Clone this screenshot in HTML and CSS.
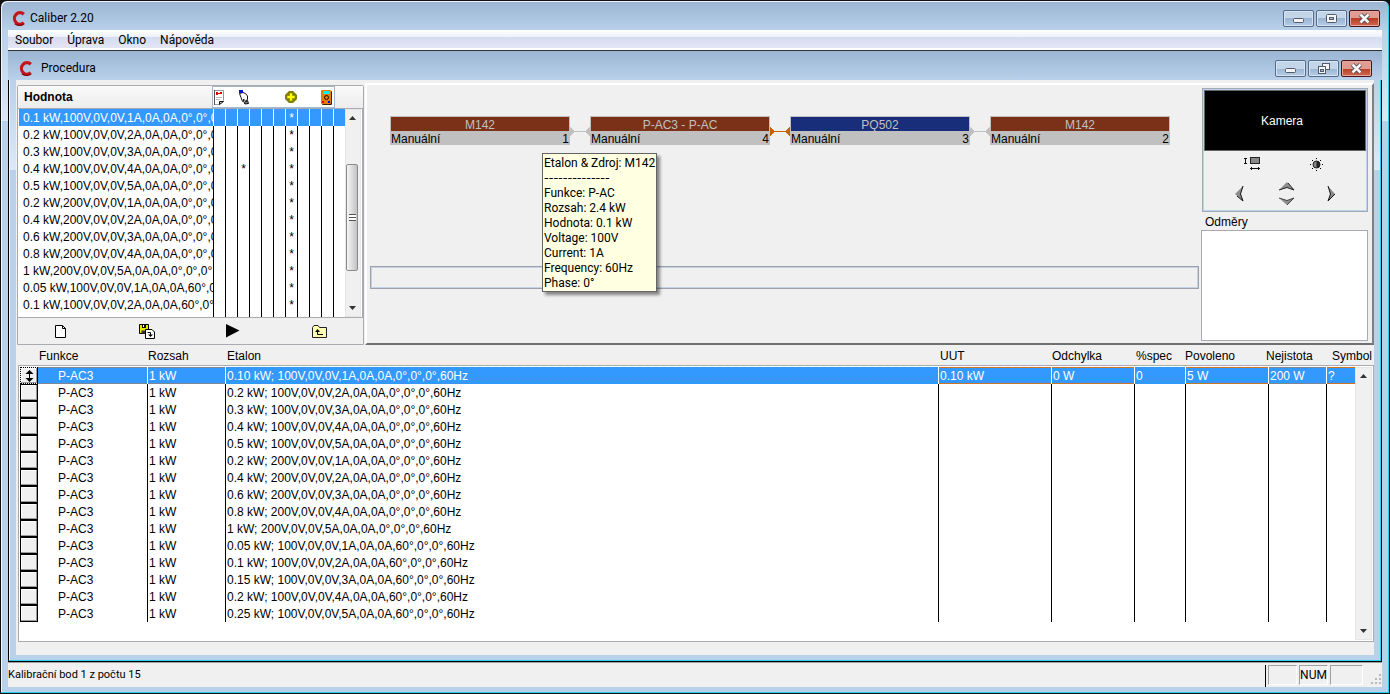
FILE: index.html
```html
<!DOCTYPE html>
<html lang="cs">
<head>
<meta charset="utf-8">
<title>Caliber 2.20</title>
<link rel="stylesheet" href="styles.css">
</head>
<body>
<svg class="defs" aria-hidden="true">
  <symbol id="i-c" viewBox="0 0 14 16"><path d="M12 4A5.200 5.500 0 1 0 12 12" fill="none" stroke="#c4161a" stroke-width="3"/><path d="M3.500 13A6 5 0 0 0 12 13" fill="none" stroke="#7d0508" stroke-width="1"/></symbol>
  <symbol id="i-min" viewBox="0 0 29 15"><rect x="9.500" y="7.500" width="10" height="4" rx="1" fill="#f4f4f4" stroke="#555a66"/></symbol>
  <symbol id="i-max" viewBox="0 0 29 15"><rect x="9.500" y="3.500" width="10" height="8" rx="1" fill="#f4f4f4" stroke="#555a66"/><rect x="12.500" y="6.500" width="4" height="2" fill="#9fbbd8" stroke="#555a66"/></symbol>
  <symbol id="i-rest" viewBox="0 0 29 15"><rect x="13.500" y="2.500" width="7" height="6" fill="#f4f4f4" stroke="#555a66"/><rect x="9.500" y="5.500" width="7" height="7" fill="#f4f4f4" stroke="#555a66"/><rect x="11.500" y="8.500" width="3" height="2" fill="#9fbbd8" stroke="#555a66"/></symbol>
  <symbol id="i-close" viewBox="0 0 29 15"><path d="M10.500 3.500L18.500 11.500M18.500 3.500L10.500 11.500" stroke="#4b4651" stroke-width="4.500"/><path d="M10.500 3.500L18.500 11.500M18.500 3.500L10.500 11.500" stroke="#f6f6f6" stroke-width="2.600"/></symbol>
  <symbol id="i-up" viewBox="0 0 7 4"><path d="M0 4L3.500 0L7 4Z" fill="#333"/></symbol>
  <symbol id="i-down" viewBox="0 0 7 4"><path d="M0 0L3.500 4L7 0Z" fill="#333"/></symbol>
</svg>
<div class="window">
  <header class="titlebar">
    <svg class="logo"><use href="#i-c"/></svg><h1 class="caption">Caliber 2.20</h1>
    <div class="controls">
      <button class="ctl" aria-label="Minimalizovat"><svg><use href="#i-min"/></svg></button>
      <button class="ctl" aria-label="Maximalizovat"><svg><use href="#i-max"/></svg></button>
      <button class="ctl ctl-close" aria-label="Zavřít"><svg><use href="#i-close"/></svg></button>
    </div>
  </header>
  <nav class="menu"><button>Soubor</button><button>Úprava</button><button>Okno</button><button>Nápověda</button></nav>

  <section class="child">
    <header class="titlebar child-title">
      <svg class="logo"><use href="#i-c"/></svg><h2 class="caption">Procedura</h2>
      <div class="controls">
        <button class="ctl" aria-label="Minimalizovat"><svg><use href="#i-min"/></svg></button>
        <button class="ctl" aria-label="Obnovit"><svg><use href="#i-rest"/></svg></button>
        <button class="ctl ctl-close" aria-label="Zavřít"><svg><use href="#i-close"/></svg></button>
      </div>
    </header>
    <div class="frame">
      <main class="client">
        <div class="upper">
          <section class="points">
            <div class="points-head">
              <strong>Hodnota</strong>
              <div class="marks">
                <svg class="m1" viewBox="0 0 12 15"><path d="M.5.5H9.500V10.500L5.500 14.500H.5Z" fill="#fff" stroke="#999"/><path d="M.5 0V15" stroke="#555"/><path d="M5.500 14.500V11.500H9.500Z" fill="#ddd" stroke="#111"/><path d="M2 3.500H8" stroke="#e00000" stroke-width="1"/><path d="M2 2h2v3H2zM6 2h2v2H6z" fill="#e00000"/><path d="M2 7.500H8M2 9.500H6" stroke="#bbb"/></svg>
                <svg class="m2" viewBox="0 0 12 15"><path d="M1.500 3.500L3 7.500L4.500 11.500H5.500V9L8 11.500L9.500 9V6L7.500 3.500L5 2.500Z" fill="#fff" stroke="#111"/><path d="M6 12.500L9.500 10.500L10.500 13.500L7 14Z" fill="#777" stroke="#111"/><path d="M1 0H5V3H1Z" fill="#0015c8"/></svg>
                <svg class="m3" viewBox="0 0 12 12"><path d="M4 0H8L12 4V8L8 12H4L0 8V4Z" fill="#7d7d00"/><path d="M4.500 2H7.500V4.500H10V7.500H7.500V10H4.500V7.500H2V4.500H4.500Z" fill="#b5b500"/><path d="M6 2.500V9.500M2.500 6H9.500" stroke="#ff0" stroke-width="2"/></svg>
                <svg class="m4" viewBox="0 0 11 15"><rect x="1" y="1" width="10" height="14" rx="1" fill="#3a2000"/><rect x="0" y="0" width="10" height="14" rx="1" fill="#e57b00"/><rect x="2" y="1" width="7" height="3" fill="#00f3f3"/><circle cx="5.500" cy="7.500" r="2" fill="none" stroke="#111"/><path d="M1 11h2v2H1z" fill="#e00"/><path d="M7 11h2v2H7z" fill="#00e"/></svg>
              </div>
            </div>
            <div class="list">
              <table class="list-table">
                <colgroup><col class="v"><col class="m"><col class="m"><col class="m"><col class="m"><col class="m"><col class="m"><col class="m"><col class="m"><col class="m"><col class="m"><col class="m"></colgroup>
                <tbody>
                <tr class="sel"><td>0.1 kW,100V,0V,0V,1A,0A,0A,0°,0°,0<td><td><td><td><td><td><td>*<td><td><td><td></tr>
                <tr><td>0.2 kW,100V,0V,0V,2A,0A,0A,0°,0°,0<td><td><td><td><td><td><td>*<td><td><td><td></tr>
                <tr><td>0.3 kW,100V,0V,0V,3A,0A,0A,0°,0°,0<td><td><td><td><td><td><td>*<td><td><td><td></tr>
                <tr><td>0.4 kW,100V,0V,0V,4A,0A,0A,0°,0°,0<td><td><td>*<td><td><td><td>*<td><td><td><td></tr>
                <tr><td>0.5 kW,100V,0V,0V,5A,0A,0A,0°,0°,0<td><td><td><td><td><td><td>*<td><td><td><td></tr>
                <tr><td>0.2 kW,200V,0V,0V,1A,0A,0A,0°,0°,0<td><td><td><td><td><td><td>*<td><td><td><td></tr>
                <tr><td>0.4 kW,200V,0V,0V,2A,0A,0A,0°,0°,0<td><td><td><td><td><td><td>*<td><td><td><td></tr>
                <tr><td>0.6 kW,200V,0V,0V,3A,0A,0A,0°,0°,0<td><td><td><td><td><td><td>*<td><td><td><td></tr>
                <tr><td>0.8 kW,200V,0V,0V,4A,0A,0A,0°,0°,0<td><td><td><td><td><td><td>*<td><td><td><td></tr>
                <tr><td>1 kW,200V,0V,0V,5A,0A,0A,0°,0°,0°,<td><td><td><td><td><td><td>*<td><td><td><td></tr>
                <tr><td>0.05 kW,100V,0V,0V,1A,0A,0A,60°,0<td><td><td><td><td><td><td>*<td><td><td><td></tr>
                <tr><td>0.1 kW,100V,0V,0V,2A,0A,0A,60°,0°<td><td><td><td><td><td><td>*<td><td><td><td></tr>
                <tr class="rest"><td><td><td><td><td><td><td><td><td><td><td><td></tr>
                </tbody>
              </table>
              <div class="scroll">
                <button class="arrow" aria-label="Nahoru"><svg><use href="#i-up"/></svg></button>
                <div class="track"><div class="thumb"></div></div>
                <button class="arrow" aria-label="Dolů"><svg><use href="#i-down"/></svg></button>
              </div>
            </div>
            <div class="tools">
              <button aria-label="Nový"><svg width="11" height="13" viewBox="0 0 11 13"><path d="M.5.5H7.500L10.500 3.500V12.500H.5Z" fill="#fff" stroke="#000"/><path d="M7.500.5V3.500H10.500" fill="none" stroke="#000"/></svg></button>
              <button aria-label="Uložit"><svg width="16" height="15" viewBox="0 0 16 15"><path d="M.5.5H9.500V9.500H.5Z" fill="#e6e600" stroke="#000"/><path d="M3 0H7V4H3Z" fill="#111"/><path d="M4 1H5V3H4Z" fill="#fff"/><path d="M2.500 6.500H7.500V9.500H2.500Z" fill="#333"/><path d="M6.500 5.500H13L15.500 8V14.500H6.500Z" fill="#fff" stroke="#000"/><path d="M8.500 8.500H11.500V12" fill="none" stroke="#000"/><path d="M9 10.500H14L11.500 13Z"/></svg></button>
              <button aria-label="Spustit"><svg width="14" height="14" viewBox="0 0 14 14"><path d="M0 0L13.500 6.500L0 13.500Z"/></svg></button>
              <button aria-label="O úroveň výš"><svg width="15" height="13" viewBox="0 0 15 13"><path d="M.5 12.500V2.500L2 .5H6L7.500 2.500H14.500V12.500Z" fill="#ffffb0" stroke="#222"/><path d="M5.500 5V9.500H11" fill="none" stroke="#000"/><path d="M3 7L5.500 4L8 7Z"/></svg></button>
            </div>
          </section>

          <section class="board">
            <div class="flow">
              <div class="chain">
                <div class="node"><div class="name">M142</div><div class="mode"><span>Manuální</span><span>1</span></div></div>
                <div class="link"></div>
                <div class="node"><div class="name">P-AC3 - P-AC</div><div class="mode"><span>Manuální</span><span>4</span></div></div>
                <div class="link hot"></div>
                <div class="node blue"><div class="name">PQ502</div><div class="mode"><span>Manuální</span><span>3</span></div></div>
                <div class="link"></div>
                <div class="node"><div class="name">M142</div><div class="mode"><span>Manuální</span><span>2</span></div></div>
              </div>
              <div class="progress"></div>
              <div class="tip" role="tooltip">Etalon &amp; Zdroj: M142<br><span class="dashes">--------------</span><br>Funkce: P-AC<br>Rozsah: 2.4 kW<br>Hodnota: 0.1 kW<br>Voltage: 100V<br>Current: 1A<br>Frequency: 60Hz<br>Phase: 0°</div>
            </div>
            <aside class="side">
              <div class="camera">
                <div class="screen">Kamera</div>
                <div class="pad">
                  <button class="size" aria-label="Velikost"><svg width="18" height="14" viewBox="0 0 18 14"><path d="M1.500 1V7M0 1.500H3M0 6.500H3" stroke="#111"/><rect x="6.500" y=".5" width="9" height="6" fill="#888" stroke="#222"/><path d="M6 11.500H16M7.500 10V13M14.500 10V13" stroke="#111"/></svg></button>
                  <button class="light" aria-label="Jas"><svg width="13" height="13" viewBox="0 0 13 13"><circle cx="6.500" cy="6.500" r="3.500" fill="#888" stroke="#222"/><path d="M6.500 3A3.500 3.500 0 0 1 6.500 10Z" fill="#222"/><path d="M6 0h1v1H6zM6 12h1v1H6zM0 6h1v1H0zM12 6h1v1h-1zM2 2h1v1H2zM10 2h1v1h-1zM2 10h1v1H2zM10 10h1v1h-1z"/></svg></button>
                  <button class="left" aria-label="Vlevo"><svg width="9" height="16" viewBox="0 0 9 16"><path d="M8 0L0 8L8 15L5.500 8Z" fill="#8d8d8d"/><path d="M8 0L5.500 8L8 15M2 10L8 15" fill="none" stroke="#111"/></svg></button>
                  <div class="updown">
                    <button aria-label="Výš"><svg width="16" height="9" viewBox="0 0 16 9"><path d="M0 8L8 0L15 8L8 5.500Z" fill="#8d8d8d"/><path d="M0 8L8 5.500L15 8L9 1" fill="none" stroke="#222"/></svg></button>
                    <button aria-label="Níž"><svg width="16" height="9" viewBox="0 0 16 9"><path d="M0 1L8 8L15 1L8 3.500Z" fill="#8d8d8d"/><path d="M0 1L8 3.500L15 1L8 8" fill="none" stroke="#444"/></svg></button>
                  </div>
                  <button class="right" aria-label="Vpravo"><svg width="9" height="16" viewBox="0 0 9 16"><path d="M1 0L8 8L1 15L3.500 8Z" fill="#8d8d8d"/><path d="M1 0L3.500 8L1 15L8 8" fill="none" stroke="#111"/></svg></button>
                </div>
              </div>
              <label class="notes-label" for="notes">Odměry</label>
              <textarea class="notes" id="notes"></textarea>
            </aside>
          </section>
        </div>

        <table class="data heads">
          <colgroup><col class="c0"><col class="c1"><col class="c2"><col><col class="h4"><col class="h5"><col class="h6"><col class="h7"><col class="h8"><col class="c9"></colgroup>
          <thead><tr><th></th><th>Funkce</th><th>Rozsah</th><th class="et">Etalon</th><th>UUT</th><th>Odchylka</th><th>%spec</th><th>Povoleno</th><th>Nejistota</th><th class="sym">Symbol</th></tr></thead>
        </table>
        <div class="grid">
          <table class="data rows">
            <colgroup><col class="c0"><col class="c1"><col class="c2"><col><col class="c4"><col class="c5"><col class="c6"><col class="c7"><col class="c8"><col class="c9"></colgroup>
            <tbody>
            <tr class="sel"><td><button class="row cur" aria-label="Řádek 1"><svg width="9" height="12" viewBox="0 0 9 12"><path d="M4.500 0L8.500 4H.5ZM4.500 12L.5 8H8.500ZM4 3H5V9H4Z"/></svg></button><td>P-AC3<td>1 kW<td>0.10 kW; 100V,0V,0V,1A,0A,0A,0°,0°,0°,60Hz<td>0.10 kW<td>0 W<td>0<td>5 W<td>200 W<td>?</tr>
            <tr><td><button class="row" aria-label="Řádek 2"></button><td>P-AC3<td>1 kW<td>0.2 kW; 100V,0V,0V,2A,0A,0A,0°,0°,0°,60Hz<td><td><td><td><td><td></tr>
            <tr><td><button class="row" aria-label="Řádek 3"></button><td>P-AC3<td>1 kW<td>0.3 kW; 100V,0V,0V,3A,0A,0A,0°,0°,0°,60Hz<td><td><td><td><td><td></tr>
            <tr><td><button class="row" aria-label="Řádek 4"></button><td>P-AC3<td>1 kW<td>0.4 kW; 100V,0V,0V,4A,0A,0A,0°,0°,0°,60Hz<td><td><td><td><td><td></tr>
            <tr><td><button class="row" aria-label="Řádek 5"></button><td>P-AC3<td>1 kW<td>0.5 kW; 100V,0V,0V,5A,0A,0A,0°,0°,0°,60Hz<td><td><td><td><td><td></tr>
            <tr><td><button class="row" aria-label="Řádek 6"></button><td>P-AC3<td>1 kW<td>0.2 kW; 200V,0V,0V,1A,0A,0A,0°,0°,0°,60Hz<td><td><td><td><td><td></tr>
            <tr><td><button class="row" aria-label="Řádek 7"></button><td>P-AC3<td>1 kW<td>0.4 kW; 200V,0V,0V,2A,0A,0A,0°,0°,0°,60Hz<td><td><td><td><td><td></tr>
            <tr><td><button class="row" aria-label="Řádek 8"></button><td>P-AC3<td>1 kW<td>0.6 kW; 200V,0V,0V,3A,0A,0A,0°,0°,0°,60Hz<td><td><td><td><td><td></tr>
            <tr><td><button class="row" aria-label="Řádek 9"></button><td>P-AC3<td>1 kW<td>0.8 kW; 200V,0V,0V,4A,0A,0A,0°,0°,0°,60Hz<td><td><td><td><td><td></tr>
            <tr><td><button class="row" aria-label="Řádek 10"></button><td>P-AC3<td>1 kW<td>1 kW; 200V,0V,0V,5A,0A,0A,0°,0°,0°,60Hz<td><td><td><td><td><td></tr>
            <tr><td><button class="row" aria-label="Řádek 11"></button><td>P-AC3<td>1 kW<td>0.05 kW; 100V,0V,0V,1A,0A,0A,60°,0°,0°,60Hz<td><td><td><td><td><td></tr>
            <tr><td><button class="row" aria-label="Řádek 12"></button><td>P-AC3<td>1 kW<td>0.1 kW; 100V,0V,0V,2A,0A,0A,60°,0°,0°,60Hz<td><td><td><td><td><td></tr>
            <tr><td><button class="row" aria-label="Řádek 13"></button><td>P-AC3<td>1 kW<td>0.15 kW; 100V,0V,0V,3A,0A,0A,60°,0°,0°,60Hz<td><td><td><td><td><td></tr>
            <tr><td><button class="row" aria-label="Řádek 14"></button><td>P-AC3<td>1 kW<td>0.2 kW; 100V,0V,0V,4A,0A,0A,60°,0°,0°,60Hz<td><td><td><td><td><td></tr>
            <tr><td><button class="row" aria-label="Řádek 15"></button><td>P-AC3<td>1 kW<td>0.25 kW; 100V,0V,0V,5A,0A,0A,60°,0°,0°,60Hz<td><td><td><td><td><td></tr>
            </tbody>
          </table>
          <div class="scroll">
            <button class="arrow" aria-label="Nahoru"><svg><use href="#i-up"/></svg></button>
            <div class="track"></div>
            <button class="arrow" aria-label="Dolů"><svg><use href="#i-down"/></svg></button>
          </div>
        </div>
      </main>
    </div>
  </section>

  <footer class="status">
    <span class="msg">Kalibrační bod 1 z počtu 15</span>
    <span class="cell"></span><span class="cell num">NUM</span><span class="cell last"></span>
    <svg class="grip" width="10" height="10" viewBox="0 0 10 10"><path d="M8 0h2v2H8zM4 4h2v2H4zM8 4h2v2H8zM0 8h2v2H0zM4 8h2v2H4zM8 8h2v2H8z" fill="#b8b8b8"/></svg>
  </footer>
</div>
</body>
</html>
```
FILE: styles.css
```css
* { box-sizing: border-box; }
html, body { height: 100%; margin: 0; }
body {
  background: #111;
  font: 12px/17px "Liberation Sans", Arial, sans-serif;
  color: #000;
  overflow: hidden;
}
button { margin: 0; padding: 0; border: 0; background: none; font: inherit; color: inherit; }
.defs { position: absolute; width: 0; height: 0; }

/* Outer window */
.window {
  display: flex;
  flex-direction: column;
  height: 100%;
  padding: 0 7px 6px;
  border: 1px solid #111;
  border-radius: 7px 7px 0 0;
  background: linear-gradient(#9ab4d2, #b9d1ea 30px, #dce9f7 120px, #b9d1ea 120px);
  box-shadow: inset -1px -1px #22d3ee, inset 1px 1px #eef5fc;
}
.titlebar {
  display: flex;
  align-items: center;
  height: 29px;
  padding: 5px 2px 0 3px;
  font-family: Roboto, "Open Sans", sans-serif;
}
.logo { width: 15px; height: 17px; }
.caption { flex: 1; margin: 0 0 0 4px; font-size: 12px; font-weight: 400; }
.controls { display: flex; gap: 2px; }
.ctl {
  width: 31px;
  height: 17px;
  border: 1px solid #566b87;
  border-radius: 2px;
  box-shadow: inset 0 0 0 1px #d5e3f2;
  background: linear-gradient(#c3d5e9 50%, #9ab5d3 50%, #b5cde6);
}
.ctl svg { display: block; width: 29px; height: 15px; }
.ctl-close {
  border-color: #47141a;
  box-shadow: inset 0 0 0 1px #e6a79d;
  background: linear-gradient(#e09c90 50%, #b93c24 50%, #cf6a52);
}
.menu {
  display: flex;
  gap: 14px;
  height: 21px;
  padding: 0 7px;
  border-bottom: 1px solid #333;
  background: linear-gradient(#fff, #edf0f9 35%, #d5dcef 35%, #e2e6f5 90%, #fff 90%);
  font-family: Roboto, "Open Sans", sans-serif;
}

/* Child window */
.child { flex: 1; display: flex; flex-direction: column; min-height: 0; }
.child-title {
  padding: 6px 10px 0;
  background: linear-gradient(#9ab4d2, #b9d1ea);
}
.child-title .caption { margin-left: 8px; }
.frame {
  flex: 1;
  display: flex;
  min-height: 0;
  padding: 0 7px 6px;
  border: 1px solid #000;
  border-top: 0;
  background: linear-gradient(#b9d1ea, #dce9f7 90px, #b9d1ea 90px);
  box-shadow: inset -1px -1px #22d3ee, inset 1px 0 #eef5fc;
}
.client {
  flex: 1;
  display: flex;
  flex-direction: column;
  min-width: 0;
  background: #f0f0f0;
}
.upper { display: flex; gap: 1px; padding: 3px 0 0 1px; }

/* Calibration points */
.points {
  width: 347px;
  margin-top: 2px;
  border: 1px solid #a9abb0;
  border-radius: 2px 2px 0 0;
}
.points-head {
  display: flex;
  justify-content: space-between;
  height: 22px;
  padding: 0 28px 0 6px;
  background: linear-gradient(#fafafa, #ececec);
}
.points-head strong { line-height: 22px; }
.marks {
  display: grid;
  grid-template-columns: 24px 47px 36px 12px;
  align-items: center;
  width: 123px;
  padding-left: 1px;
  border: 1px solid #a6b6cc;
  background: #fff;
}
.m1, .m2 { width: 12px; height: 15px; }
.m3 { width: 12px; height: 12px; }
.m4 { width: 11px; height: 15px; }
.list {
  display: flex;
  padding: 0 1px 0 0;
  border: 1px solid #a9abb0;
  border-left: 0;
  background: #fff;
}
.list-table, .data { border-collapse: separate; border-spacing: 0; table-layout: fixed; }
.list-table { flex: 1; width: 0; }
.list-table .v { width: 195px; }
.list-table .m { width: 12px; }
.list-table td {
  height: 17px;
  padding: 1px 0 0;
  line-height: 16px;
  overflow: hidden;
  white-space: nowrap;
  border-left: 1px solid #000;
  text-align: center;
}
.list-table td:first-child { padding-left: 4px; border-left: 1px solid #fff; text-align: left; }
.list-table .rest td { height: 4px; }
.sel { background: #3399ff; color: #fff; }
.list-table .sel td, .rows .sel td { border-left-color: #fff; }

.scroll {
  display: flex;
  flex-direction: column;
  width: 17px;
  background: #f0f0f0;
  border: 1px solid #e6e6e6;
}
.list .scroll { width: 19px; padding-right: 2px; }
.arrow { display: flex; align-items: center; justify-content: center; height: 16px; }
.arrow svg { width: 7px; height: 4px; }
.track { flex: 1; padding: 38px 0 29px; }
.thumb {
  height: 100%;
  border: 1px solid #8b8b8b;
  border-radius: 2px;
  background:
    repeating-linear-gradient(#555 0 1px, #fff 1px 3px) center / 7px 7px no-repeat,
    linear-gradient(90deg, #f5f5f5, #dcdcdc 50%, #c2c2c6);
}
.tools {
  display: grid;
  grid-template-columns: 85px 88px 84px 1fr;
  height: 26px;
}
.tools button { display: flex; align-items: center; justify-content: center; }

/* Signal board */
.board {
  flex: 1;
  display: flex;
  min-width: 0;
  border: 2px solid #fff;
  border-color: #fff #808080 #707070 #fff;
}
.flow {
  flex: 1;
  position: relative;
  display: flex;
  flex-direction: column;
  min-width: 0;
  padding: 31px 0 0 3px;
}
.chain { display: flex; padding: 0 20px; }
.node { width: 180px; border: 1px solid #c0c0c0; background: #c0c0c0; }
.name { height: 14px; line-height: 16px; background: #7b3018; color: #c0c0c0; text-align: center; }
.blue .name { background: #182e7b; }
.mode { display: flex; justify-content: space-between; height: 13px; line-height: 16px; }
.link {
  width: 20px;
  height: 11px;
  margin-top: 10px;
  color: #c0c0c0;
  background:
    conic-gradient(from 225deg at 5px 50%, currentColor 90deg, transparent 0) left / 5px 100% no-repeat,
    conic-gradient(from 45deg at 0 50%, currentColor 90deg, transparent 0) right / 5px 100% no-repeat,
    linear-gradient(currentColor, currentColor) center / 100% 1px no-repeat;
}
.hot { color: #c86400; }
.link {
  background:
    conic-gradient(from 225deg at 5px 50%, currentColor 90deg, transparent 0) left / 5px 100% no-repeat,
    conic-gradient(from 45deg at 0 50%, currentColor 90deg, transparent 0) right / 5px 100% no-repeat,
    linear-gradient(currentColor, currentColor) center / 100% 1px no-repeat;
}
.progress { height: 23px; margin-top: 121px; border: 1px solid #a0a0a8; box-shadow: inset 0 0 0 1px #c3d3e6; }
.tip {
  position: absolute;
  left: 175px;
  top: 68px;
  padding: 2px 1px 0;
  border: 1px solid #646464;
  background: #ffffe1;
  box-shadow: 3px 3px 3px rgba(0, 0, 0, .45);
  font-family: Roboto, "Open Sans", sans-serif;
  line-height: 15px;
  white-space: nowrap;
}
.dashes { font: 13px/13px "DejaVu Sans", sans-serif; }
.side {
  display: flex;
  flex-direction: column;
  width: 173px;
  padding: 3px 4px 2px 2px;
}
.camera {
  margin-left: 1px;
  padding: 1px;
  border: 1px solid #a5a9b2;
  box-shadow: inset 0 0 0 1px #b9d4f0;
}
.screen {
  height: 61px;
  border: 1px solid #666;
  background: #000;
  color: #fff;
  text-align: center;
  line-height: 61px;
  padding-right: 6px;
}
.pad {
  display: grid;
  grid-template: 26px 1fr / 58px 50px 54px;
  height: 59px;
  align-items: center;
  justify-items: center;
}
.pad svg { display: block; }
.size { grid-column: 1; justify-self: end; }
.light { grid-column: 3; justify-self: start; margin-left: -2px; }
.left { margin-right: -12px; }
.right { margin-left: -16px; }
.updown { display: grid; gap: 6px; }
.notes-label { padding-left: 4px; margin-top: 2px; line-height: 16px; }
.notes {
  flex: 1;
  width: 100%;
  min-height: 100px;
  border: 1px solid #a9a9b0;
  background: #fff;
  resize: none;
  font: inherit;
}

/* Results table */
.heads { width: calc(100% - 21px); margin-left: 3px; }
.data col.c0 { width: 19px; }
.data col.c1 { width: 109px; }
.data col.c2 { width: 78px; }
.data col.c4 { width: 113px; }
.data col.c5 { width: 83px; }
.data col.c6 { width: 51px; }
.data col.c7 { width: 83px; }
.data col.c8 { width: 58px; }
.data col.c9 { width: 29px; }
.heads col.h4 { width: 112px; }
.heads col.h5 { width: 84px; }
.heads col.h6 { width: 49px; }
.heads col.h7 { width: 81px; }
.heads col.h8 { width: 62px; }
.heads th { height: 20px; padding: 2px 0 0 1px; text-align: left; font-weight: 400; white-space: nowrap; }
.heads .et { padding-left: 2px; }
.heads .sym { padding-left: 5px; }
.grid {
  flex: 1;
  display: flex;
  align-items: stretch;
  margin: 0 0 13px 2px;
  padding: 1px 1px 1px 0;
  border: 1px solid #a9abb0;
  background: #fff;
}
.rows { flex: 1; width: 0; align-self: flex-start; }
.rows td { height: 17px; padding: 1px 0 0 1px; line-height: 16px; border-left: 1px solid #000; white-space: nowrap; }
.rows td:nth-child(1) { padding-top: 0; border: 0; background: #fff; }
.rows td:nth-child(2) { border: 0; padding-left: 20px; }
.row {
  display: flex;
  align-items: center;
  justify-content: center;
  width: 18px;
  height: 17px;
  border: 1px solid #000;
  background: #f0f0f0;
  box-shadow: inset -1px -1px #9a9a9a, inset 1px 1px #fff;
}
.cur { border-style: dotted solid dotted dotted; }
.rows .sel td:not(:first-child) {
  background:
    repeating-linear-gradient(90deg, #c8732a 0 1px, #3399ff 1px 2px) top / 2px 1px repeat-x,
    repeating-linear-gradient(90deg, #c8732a 0 1px, #3399ff 1px 2px) bottom / 2px 1px repeat-x;
}

/* Status bar */
.status {
  display: flex;
  height: 25px;
  padding: 2px 1px 0 0;
  gap: 2px;
  border-top: 1px solid #a0a0a0;
  background: #f0f0f0;
}
.msg { flex: 1; line-height: 20px; border-right: 1px solid #000; font-family: Roboto, "Open Sans", sans-serif; font-size: 11px; }
.cell {
  width: 29px;
  height: 20px;
  border: 1px solid #a0a0a0;
  border-color: #a0a0a0 #fff #fff #a0a0a0;
  font: 12px/18px Roboto, "Open Sans", sans-serif;
  text-align: center;
}
.last { width: 33px; }
.grip { align-self: flex-end; margin: 0 0 3px 6px; }
```
